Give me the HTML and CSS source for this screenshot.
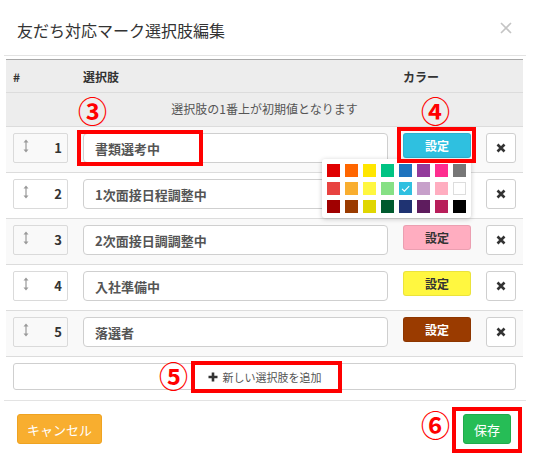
FILE: index.html
```html
<!DOCTYPE html>
<html lang="ja">
<head>
<meta charset="utf-8">
<title>友だち対応マーク選択肢編集</title>
<link rel="stylesheet" href="styles.css">
</head>
<body>
<div class="modal">
  <div class="modal-header">
    <h4 class="title">友だち対応マーク選択肢編集</h4>
    <span class="close"><svg width="12" height="12" viewBox="0 0 12 12"><path d="M1 1L11 11M11 1L1 11" stroke="#c4c4c4" stroke-width="1.6" fill="none"/></svg></span>
  </div>
  <div class="modal-body">
    <div class="table">
      <div class="row head">
        <div>#</div>
        <div>選択肢</div>
        <div>カラー</div>
        <div></div>
      </div>
      <div class="info">選択肢の1番上が初期値となります</div>

      <div class="row item odd">
        <div class="handle"><svg class="grip" width="6" height="14" viewBox="0 0 6 14"><path d="M3 2V12" stroke="#999" stroke-width="1.2"/><path d="M0.5 3.5L3 0.5L5.5 3.5Z M0.5 10.5L3 13.5L5.5 10.5Z" fill="#999"/></svg><span class="num">1</span></div>
        <div class="input">書類選考中</div>
        <div class="set c-sky">設定</div>
        <div class="del"><svg width="10" height="10" viewBox="0 0 10 10"><path d="M1.5 1.5L8.5 8.5M8.5 1.5L1.5 8.5" stroke="#333" stroke-width="2.6" fill="none"/></svg></div>
      </div>

      <div class="row item">
        <div class="handle"><svg class="grip" width="6" height="14" viewBox="0 0 6 14"><path d="M3 2V12" stroke="#999" stroke-width="1.2"/><path d="M0.5 3.5L3 0.5L5.5 3.5Z M0.5 10.5L3 13.5L5.5 10.5Z" fill="#999"/></svg><span class="num">2</span></div>
        <div class="input">1次面接日程調整中</div>
        <div class="set c-lilac">設定</div>
        <div class="del"><svg width="10" height="10" viewBox="0 0 10 10"><path d="M1.5 1.5L8.5 8.5M8.5 1.5L1.5 8.5" stroke="#333" stroke-width="2.6" fill="none"/></svg></div>
      </div>

      <div class="row item odd">
        <div class="handle"><svg class="grip" width="6" height="14" viewBox="0 0 6 14"><path d="M3 2V12" stroke="#999" stroke-width="1.2"/><path d="M0.5 3.5L3 0.5L5.5 3.5Z M0.5 10.5L3 13.5L5.5 10.5Z" fill="#999"/></svg><span class="num">3</span></div>
        <div class="input">2次面接日調調整中</div>
        <div class="set c-pink">設定</div>
        <div class="del"><svg width="10" height="10" viewBox="0 0 10 10"><path d="M1.5 1.5L8.5 8.5M8.5 1.5L1.5 8.5" stroke="#333" stroke-width="2.6" fill="none"/></svg></div>
      </div>

      <div class="row item">
        <div class="handle"><svg class="grip" width="6" height="14" viewBox="0 0 6 14"><path d="M3 2V12" stroke="#999" stroke-width="1.2"/><path d="M0.5 3.5L3 0.5L5.5 3.5Z M0.5 10.5L3 13.5L5.5 10.5Z" fill="#999"/></svg><span class="num">4</span></div>
        <div class="input">入社準備中</div>
        <div class="set c-yellow">設定</div>
        <div class="del"><svg width="10" height="10" viewBox="0 0 10 10"><path d="M1.5 1.5L8.5 8.5M8.5 1.5L1.5 8.5" stroke="#333" stroke-width="2.6" fill="none"/></svg></div>
      </div>

      <div class="row item odd last">
        <div class="handle"><svg class="grip" width="6" height="14" viewBox="0 0 6 14"><path d="M3 2V12" stroke="#999" stroke-width="1.2"/><path d="M0.5 3.5L3 0.5L5.5 3.5Z M0.5 10.5L3 13.5L5.5 10.5Z" fill="#999"/></svg><span class="num">5</span></div>
        <div class="input">落選者</div>
        <div class="set c-brown">設定</div>
        <div class="del"><svg width="10" height="10" viewBox="0 0 10 10"><path d="M1.5 1.5L8.5 8.5M8.5 1.5L1.5 8.5" stroke="#333" stroke-width="2.6" fill="none"/></svg></div>
      </div>
    </div>

    <div class="add"><svg width="10" height="10" viewBox="0 0 10 10"><path d="M5 0.5V9.5M0.5 5H9.5" stroke="#333" stroke-width="2.6" fill="none"/></svg><span>新しい選択肢を追加</span></div>
  </div>
  <div class="modal-footer">
    <div class="btn btn-cancel">キャンセル</div>
    <div class="btn btn-save">保存</div>
  </div>

  <div class="palette">
    <span class="sw" style="background:#e00000"></span>
    <span class="sw" style="background:#ff6600"></span>
    <span class="sw" style="background:#ffe600"></span>
    <span class="sw" style="background:#00c383"></span>
    <span class="sw" style="background:#1e73be"></span>
    <span class="sw" style="background:#933a9b"></span>
    <span class="sw" style="background:#ff2d8f"></span>
    <span class="sw" style="background:#777777"></span>
    <span class="sw" style="background:#e84340"></span>
    <span class="sw" style="background:#f9ae2f"></span>
    <span class="sw" style="background:#fff740"></span>
    <span class="sw" style="background:#86e085"></span>
    <span class="sw sel" style="background:#2fc0e0"><svg width="13" height="13" viewBox="0 0 13 13"><path d="M3 6.8L5.4 9.2L10.2 4.2" stroke="#fff" stroke-width="1.1" fill="none"/></svg></span>
    <span class="sw" style="background:#c7a0ca"></span>
    <span class="sw" style="background:#ffadc0"></span>
    <span class="sw white" style="background:#ffffff"></span>
    <span class="sw" style="background:#a00000"></span>
    <span class="sw" style="background:#9a3b00"></span>
    <span class="sw" style="background:#e0d600"></span>
    <span class="sw" style="background:#005a2e"></span>
    <span class="sw" style="background:#1f3372"></span>
    <span class="sw" style="background:#5e1c5e"></span>
    <span class="sw" style="background:#b81e5a"></span>
    <span class="sw" style="background:#000000"></span>
  </div>

  <span class="mark m3">③</span>
  <span class="mark m4">④</span>
  <span class="mark m5">⑤</span>
  <span class="mark m6">⑥</span>
  <span class="hl hl-input"></span>
  <span class="hl hl-set"></span>
  <span class="hl hl-add"></span>
  <span class="hl hl-save"></span>
</div>
</body>
</html>
```

FILE: styles.css
```css
* { box-sizing: border-box; }
html, body { margin: 0; padding: 0; background: #fff; }
body {
  font-family: "Noto Sans CJK JP", "Noto Sans", sans-serif;
  color: #333;
  width: 534px;
  height: 464px;
  overflow: hidden;
}
.modal {
  position: relative;
  margin-left: 4px;
  width: 522px;
}
.modal-header {
  height: 56px;
  padding: 19px 14px 0 13px;
  border-bottom: 1px solid #e3e3e3;
  display: flex;
  justify-content: space-between;
  align-items: flex-start;
}
.title {
  margin: 0;
  font-size: 16px;
  line-height: 22px;
  font-weight: normal;
  color: #333;
}
.close { display: block; padding-top: 3px; line-height: 0; }

.modal-body { padding: 3px 3px 10px 2px; }
.table { border-top: 1px solid #a8a8a8; }
.row {
  display: grid;
  grid-template-columns: 55px 305px 68px 30px;
  column-gap: 15px;
  padding: 0 7px;
}
.head {
  background: #ededed;
  height: 32px;
  align-items: center;
  font-size: 12px;
  font-weight: bold;
  color: #333;
}
.info {
  background: #ededed;
  border-top: 1px solid #dcdcdc;
  height: 34px;
  padding-bottom: 3px;
  display: flex;
  align-items: center;
  justify-content: center;
  font-size: 12px;
  color: #555;
}
.item {
  border-top: 1px solid #dcdcdc;
  padding-top: 6px;
  padding-bottom: 9px;
  background: #fff;
}
.item.odd { background: #f9f9f9; }
.item.last { border-bottom: 1px solid #dcdcdc; height: 47px; }
.item:not(.last) { height: 46px; }
.handle {
  height: 30px;
  border: 1px solid #dadada;
  border-radius: 2px;
  display: flex;
  align-items: center;
  justify-content: space-between;
  padding: 0 5px 1px 9px;
}
.grip { margin-top: -4px; }
.num { font-size: 13px; font-weight: bold; color: #333; }
.input {
  height: 30px;
  border: 1px solid #cfcfcf;
  border-radius: 4px;
  background: #fff;
  padding: 0 11px;
  display: flex;
  align-items: center;
  font-size: 13px;
  font-weight: bold;
  color: #555;
}
.set {
  height: 25px;
  border-radius: 3px;
  display: flex;
  align-items: center;
  justify-content: center;
  font-size: 12px;
  font-weight: bold;
  color: #333;
  border: 1px solid rgba(0,0,0,0.08);
}
.c-sky { background: #2fc0e0; color: #fff; }
.c-lilac { background: #c7a0ca; }
.c-pink { background: #ffadc0; }
.c-yellow { background: #fff740; }
.c-brown { background: #9a3b00; color: #fff; }
.del {
  height: 30px;
  border: 1px solid #cfcfcf;
  border-radius: 3px;
  background: #fff;
  display: flex;
  align-items: center;
  justify-content: center;
}
.add {
  margin: 6px 7px 0 7px;
  height: 27px;
  border: 1px solid #cfcfcf;
  border-radius: 3px;
  background: #fff;
  display: flex;
  align-items: center;
  justify-content: center;
  gap: 5px;
  font-size: 11px;
  color: #555;
}
.modal-footer {
  border-top: 1px solid #e3e3e3;
  padding: 13px 15px 0 13px;
  display: flex;
  justify-content: space-between;
}
.btn {
  height: 30px;
  border-radius: 3px;
  display: flex;
  align-items: center;
  justify-content: center;
  font-size: 13px;
  color: #fff;
}
.btn-cancel { width: 85px; background: #f8ae2f; border: 1px solid #efa321; }
.btn-save { width: 48px; background: #26bd56; border: 1px solid #20ab4c; }

.palette {
  position: absolute;
  left: 318px;
  top: 159px;
  width: 149px;
  height: 59px;
  padding: 5px;
  background: #fff;
  border-radius: 3px;
  box-shadow: 0 1px 5px rgba(0,0,0,0.22);
  display: grid;
  grid-template-columns: repeat(8, 13px);
  grid-auto-rows: 13px;
  gap: 5px;
}
.sw { display: block; width: 13px; height: 13px; line-height: 0; }
.sw.white { border: 1px solid #ddd; }

.mark {
  position: absolute;
  font-family: "Noto Sans CJK JP", sans-serif;
  font-size: 29px;
  font-weight: bold;
  line-height: 29px;
  color: #f00;
}
.m3 { left: 74px; top: 96px; }
.m4 { left: 417px; top: 96px; }
.m5 { left: 155px; top: 361px; }
.m6 { left: 417px; top: 410px; }
.hl {
  position: absolute;
  border: 4px solid #f00;
}
.hl-input { left: 73px; top: 130px; width: 126px; height: 36px; }
.hl-set { left: 393px; top: 127px; width: 79px; height: 36px; }
.hl-add { left: 187px; top: 361px; width: 151px; height: 32px; }
.hl-save { left: 448px; top: 407px; width: 70px; height: 46px; }
```
